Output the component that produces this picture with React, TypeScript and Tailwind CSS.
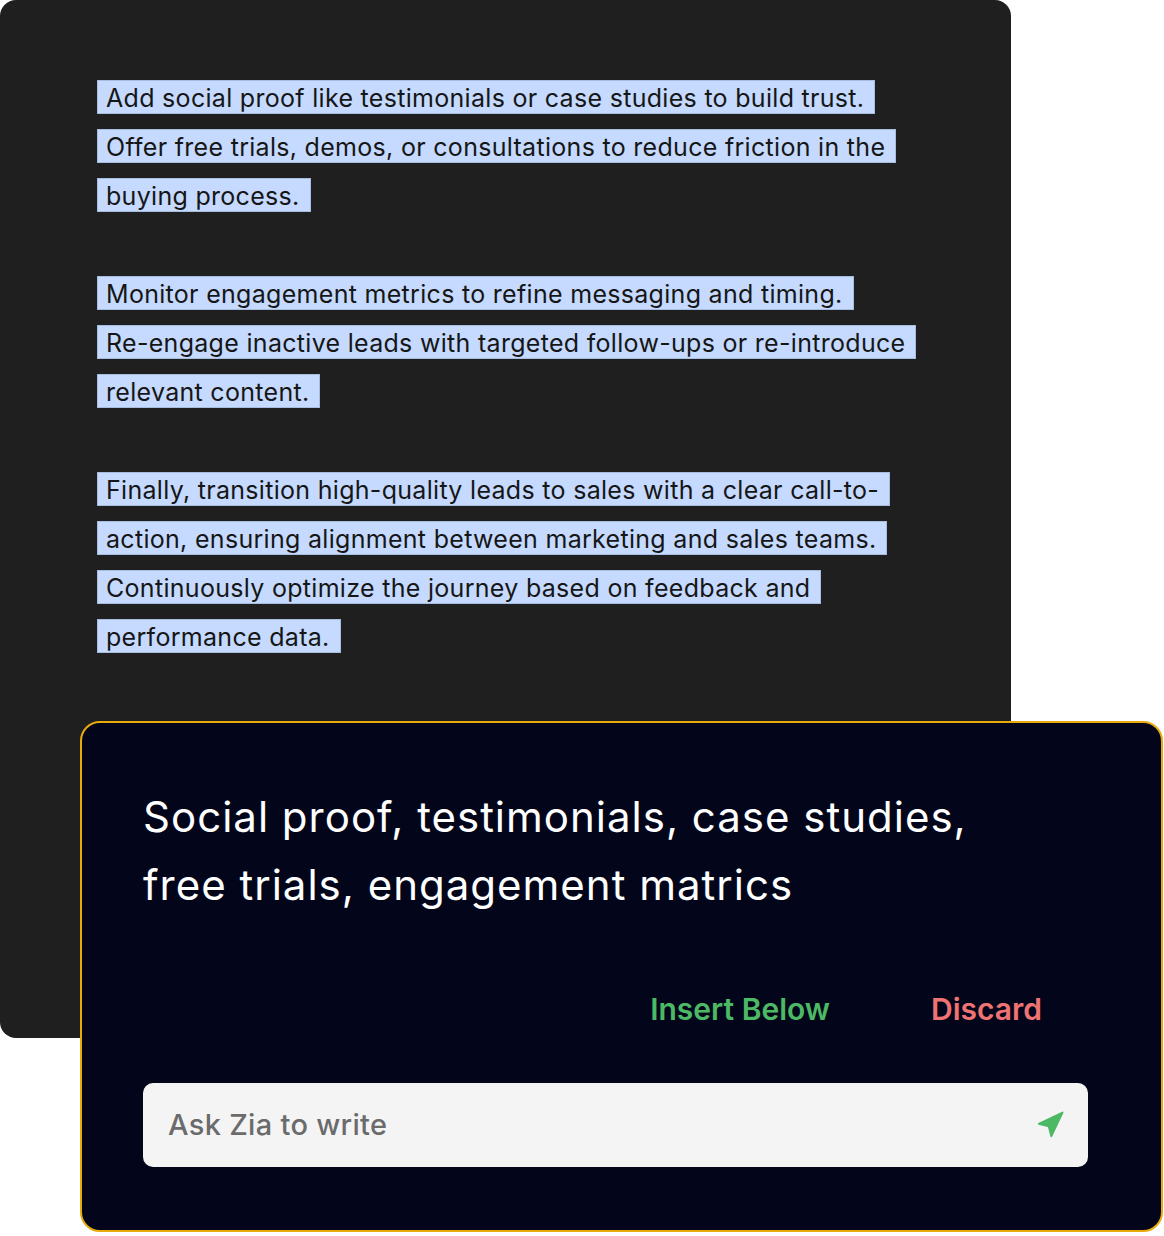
import { Navigation } from 'lucide-react';

const paragraphs = [
  [
    'Add social proof like testimonials or case studies to build trust.',
    'Offer free trials, demos, or consultations to reduce friction in the',
    'buying process.',
  ],
  [
    'Monitor engagement metrics to refine messaging and timing.',
    'Re-engage inactive leads with targeted follow-ups or re-introduce',
    'relevant content.',
  ],
  [
    'Finally, transition high-quality leads to sales with a clear call-to-',
    'action, ensuring alignment between marketing and sales teams.',
    'Continuously optimize the journey based on feedback and',
    'performance data.',
  ],
];

export default function App() {
  return (
    <div className="w-[1164px] h-[1236px] bg-white font-['Inter','Noto_Sans',sans-serif]">
      {/* Editor panel with selected text */}
      <div className="w-[1011px] h-[1038px] bg-[#1f1f1f] rounded-[16px] pt-[72px] pl-[97px]">
        {paragraphs.map((lines, i) => (
          <div key={i} className="mb-[49px]">
            {lines.map((line) => (
              <div key={line} className="h-[49px] flex items-center">
                <span className="h-[34px] leading-[34px] px-2 pr-[10px] bg-[#c5dafe] border border-[#a7bde0] text-[#161616] text-[25px] tracking-[0.3px]">
                  {line}
                </span>
              </div>
            ))}
          </div>
        ))}
      </div>

      {/* Zia card */}
      <div className="relative -mt-[317px] ml-[80px] w-[1083px] h-[511px] bg-[#03061a] border-2 border-[#e9ab0c] rounded-[20px] pt-[60px] pl-[61px] pr-[73px]">
        <p className="text-white text-[42px] leading-[68px] font-normal tracking-[1px]">
          Social proof, testimonials, case studies,
          <br />
          free trials, engagement matrics
        </p>
        <div className="mt-[70px] flex justify-end gap-[101px] pr-[46px] text-[30px] font-semibold leading-[40px]">
          <button className="text-[#4cb964]">Insert Below</button>
          <button className="text-[#f07373]">Discard</button>
        </div>
        <div className="mt-[54px] h-[84px] bg-[#f4f4f4] rounded-[10px] flex items-center justify-between pl-[25px] pr-[23px]">
          <span className="text-[#6b6b6b] text-[29px] font-medium tracking-[0.3px]">Ask Zia to write</span>
          <Navigation className="w-[30px] h-[30px] text-[#4cb964] fill-[#4cb964]" strokeWidth={1.5} />
        </div>
      </div>
    </div>
  );
}
